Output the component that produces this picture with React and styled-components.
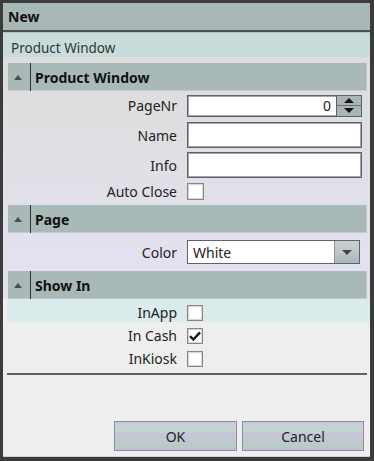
import React from "react"
import styled, { createGlobalStyle } from "styled-components"

const GlobalStyle = createGlobalStyle`
	html, body {
		margin: 0;
		padding: 0;
		background: #3b3b3b;
	}
	* {
		box-sizing: border-box;
	}
`

const Window = styled.div`
	width: 374px;
	height: 461px;
	border-style: solid;
	border-color: #3b3b3b;
	border-width: 3px 4px 4px 3px;
	background: #eeeeee;
	display: flex;
	flex-direction: column;
	font-family: "Noto Sans", "Open Sans", sans-serif;
	color: #222;
	overflow: hidden;
`

const TitleBar = styled.div`
	height: 29px;
	background: #a8b8b7;
	border-bottom: 2px solid #4c5051;
	padding-left: 5px;
	display: flex;
	align-items: center;
	font-size: 14px;
	font-weight: 700;
	color: #111;
`

const Caption = styled.div`
	height: 25px;
	border-top: 1px solid #b7c3c6;
	background: #c9dcdc;
	padding-left: 8px;
	display: flex;
	align-items: flex-end;
	font-size: 13.5px;
	line-height: 17px;
	color: #333;
`

const Grid = styled.div`
	padding-top: 6px;
	background: linear-gradient(to bottom, #dddddd 0px, #dfdfe3 90px, #e3e1ef 200px);
`

const Header = styled.div`
	margin: 0 3px 0 5px;
	height: 28px;
	background: #a8b9b8;
	box-shadow: inset -1px -1px 0 #c3c8d4;
	display: flex;
	align-items: stretch;
`

const Toggle = styled.div`
	width: 23px;
	padding-left: 6px;
	display: flex;
	align-items: center;
	border-right: 1px solid #2e2e2e;

	&::before {
		content: "";
		border-left: 4px solid transparent;
		border-right: 4px solid transparent;
		border-bottom: 5px solid #4f4f4f;
	}
`

const HeaderTitle = styled.div`
	padding-left: 4px;
	display: flex;
	align-items: center;
	font-size: 14px;
	font-weight: 700;
	color: #111;
`

const Body = styled.div`
	padding-bottom: ${p => p.$pb || 0}px;
	background: ${p => p.$bg || "transparent"};
`

const Row = styled.div`
	display: grid;
	grid-template-columns: 184px 1fr;
	align-items: center;
	height: ${p => p.$h}px;
	padding-top: ${p => p.$pt || 0}px;
	background: ${p =>
		p.$active ? "linear-gradient(to right, transparent 4px, #d9ebeb 4px)" : "transparent"};
`

const Label = styled.div`
	text-align: right;
	padding-right: 10px;
	font-size: 14px;
	color: #222;
`

const TextBox = styled.div`
	width: 175px;
	height: ${p => p.$h}px;
	background: #fff;
	border: 1px solid #5d606c;
	box-shadow: inset 0 0 0 1px #a3a5b0;
	display: flex;
	align-items: stretch;
`

const Value = styled.div`
	flex: 1;
	display: flex;
	align-items: center;
	justify-content: ${p => (p.$right ? "flex-end" : "flex-start")};
	padding: 0 5px;
	font-size: 14px;
	color: #222;
`

const Spinner = styled.div`
	width: 25px;
	display: flex;
	flex-direction: column;
	border-left: 1px solid #5d606c;
`

const SpinButton = styled.div`
	flex: 1;
	background: #a7b5b7;
	display: flex;
	align-items: center;
	justify-content: center;

	& + & {
		border-top: 1px solid #6a6e78;
	}

	&::before {
		content: "";
		border-left: 5px solid transparent;
		border-right: 5px solid transparent;
		${p => (p.$up ? "border-bottom: 5px solid #111;" : "border-top: 5px solid #111;")}
	}
`

const Combo = styled.div`
	width: 173px;
	height: 24px;
	background: #fff;
	border: 1px solid #5f626e;
	display: flex;
	align-items: stretch;
`

const ComboButton = styled.div`
	width: 25px;
	border-left: 1px solid #8a8c96;
	background: linear-gradient(to bottom, #c9d0d0 0%, #bfc6cc 45%, #a9b7b7 100%);
	display: flex;
	align-items: center;
	justify-content: center;

	&::before {
		content: "";
		border-left: 5px solid transparent;
		border-right: 5px solid transparent;
		border-top: 5px solid #444;
	}
`

const Check = styled.div`
	width: ${p => p.$size}px;
	height: ${p => p.$size}px;
	background: #fff;
	border: 1px solid #868686;
	box-shadow: inset 0 0 0 1px #d6d6d6;
	display: flex;
	align-items: center;
	justify-content: center;
`

const Separator = styled.div`
	margin: 5px 3px 0 4px;
	height: 2px;
	background: #5a6464;
`

const Footer = styled.div`
	flex: 1;
	display: flex;
	justify-content: flex-end;
	align-items: flex-end;
	gap: 5px;
	padding: 0 6px 5px 0;
	border-bottom: 1px solid #cfcfcf;
`

const Button = styled.div`
	width: ${p => p.$w}px;
	height: 30px;
	border: 1px solid #8d8d9b;
	background: linear-gradient(
		to bottom,
		#ccc8dc 0%,
		#ccc8dc 8%,
		#c3d5d2 12%,
		#c3d5d2 35%,
		#c9c5d9 40%,
		#c9c5d9 62%,
		#bacdc9 68%,
		#b8cac7 90%,
		#c3bfd3 94%,
		#c3bfd3 100%
	);
	display: flex;
	align-items: center;
	justify-content: center;
	font-size: 14px;
	color: #222;
`

const CheckMark = () => (
	<svg width="14" height="14" viewBox="0 0 14 14">
		<path d="M2 7.2 L5.4 10.6 L12 3.4" fill="none" stroke="#1a1a1a" strokeWidth="2.4" />
	</svg>
)

const Section = ({ title }) => (
	<Header>
		<Toggle />
		<HeaderTitle>{title}</HeaderTitle>
	</Header>
)

const App = () => {
	const showIn = [
		{ label: "InApp", checked: false, active: true },
		{ label: "In Cash", checked: true },
		{ label: "InKiosk", checked: false },
	]

	return (
		<>
			<GlobalStyle />
			<Window>
				<TitleBar>New</TitleBar>
				<Caption>Product Window</Caption>
				<Grid>
					<Section title="Product Window" />
					<Body $pb={3}>
						<Row $h={29}>
							<Label>PageNr</Label>
							<TextBox $h={22}>
								<Value $right>0</Value>
								<Spinner>
									<SpinButton $up />
									<SpinButton />
								</Spinner>
							</TextBox>
						</Row>
						<Row $h={30}>
							<Label>Name</Label>
							<TextBox $h={26} />
						</Row>
						<Row $h={30}>
							<Label>Info</Label>
							<TextBox $h={26} />
						</Row>
						<Row $h={22}>
							<Label>Auto Close</Label>
							<Check $size={17} />
						</Row>
					</Body>
					<Section title="Page" />
					<Body>
						<Row $h={38}>
							<Label>Color</Label>
							<Combo>
								<Value>White</Value>
								<ComboButton />
							</Combo>
						</Row>
					</Body>
					<Section title="Show In" />
				</Grid>
				<Body $bg="#eeeeee">
					{showIn.map(item => (
						<Row key={item.label} $h={23} $pt={4} $active={item.active}>
							<Label>{item.label}</Label>
							<Check $size={16}>{item.checked && <CheckMark />}</Check>
						</Row>
					))}
				</Body>
				<Separator />
				<Footer>
					<Button $w={123}>OK</Button>
					<Button $w={122}>Cancel</Button>
				</Footer>
			</Window>
		</>
	)
}

export default App
